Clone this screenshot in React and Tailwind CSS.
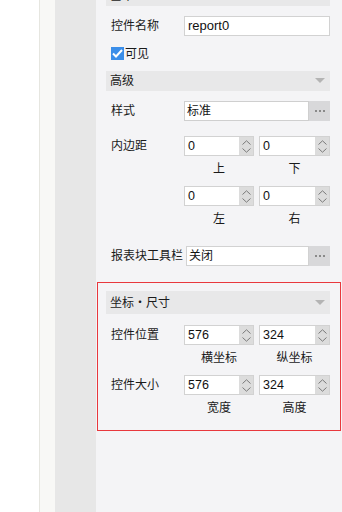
import React from "react";

const FONT = { fontFamily: '"Liberation Sans", "Noto Sans CJK SC", sans-serif' };

function Arrow() {
  return (
    <svg width="10" height="6" viewBox="0 0 10 6" className="mr-[5px]">
      <path d="M0 0 L10 0 L5 5 Z" fill="#b4b4b4" />
    </svg>
  );
}

function Header({ title, h = "h-[20px]", extra = "" }) {
  return (
    <div className={`flex items-center justify-between bg-[#e8e8e9] pl-[4px] ${h} ${extra}`}>
      <span className="text-[12px] leading-[18px] text-[#1a1a1a]">{title}</span>
      <Arrow />
    </div>
  );
}

function Chevrons() {
  return (
    <div className="flex h-full w-[14px] flex-col items-center justify-center gap-[3px] bg-[#dcdcdc]">
      <svg width="9" height="5" viewBox="0 0 9 5">
        <path d="M0.5 4.5 L4.5 0.8 L8.5 4.5" fill="none" stroke="#7a7a7a" strokeWidth="1" />
      </svg>
      <svg width="9" height="5" viewBox="0 0 9 5">
        <path d="M0.5 0.5 L4.5 4.2 L8.5 0.5" fill="none" stroke="#7a7a7a" strokeWidth="1" />
      </svg>
    </div>
  );
}

function Spin({ value, w }) {
  return (
    <div className={`flex h-[20px] border border-[#d2d2d2] bg-white ${w}`}>
      <div className="flex flex-1 items-center pl-[3px] text-[12.5px] text-[#111]">{value}</div>
      <Chevrons />
    </div>
  );
}

function SpinBlock({ label, a, b, la, lb, top = "" }) {
  return (
    <div className={`flex ${top}`}>
      <div className="w-[78px] pl-[5px] pt-[1px] text-[12px] leading-[18px] text-[#1a1a1a]">{label}</div>
      <div className="flex flex-col">
        <div className="flex gap-[5px]">
          <Spin value={a} w="w-[70px]" />
          <Spin value={b} w="w-[71px]" />
        </div>
        <div className="mt-[4px] flex gap-[5px] text-[12px] leading-[18px] text-[#1a1a1a]">
          <div className="w-[70px] text-center">{la}</div>
          <div className="w-[71px] text-center">{lb}</div>
        </div>
      </div>
    </div>
  );
}

function Dots() {
  return (
    <div className="flex h-full w-[21px] items-center justify-center gap-[2px] bg-[#d8d8da]">
      <span className="h-[2px] w-[2px] bg-[#8a8a8a]" />
      <span className="h-[2px] w-[2px] bg-[#8a8a8a]" />
      <span className="h-[2px] w-[2px] bg-[#8a8a8a]" />
    </div>
  );
}

export default function App() {
  return (
    <div className="flex h-[512px] w-[342px] overflow-hidden bg-white" style={FONT}>
      <div className="w-[39px] bg-white" />
      <div className="w-px bg-[#e6e6e0]" />
      <div className="w-[15px] bg-[#f8f8f6]" />
      <div className="w-[41px] bg-[#e7e7e7]" />
      <div className="flex flex-1 flex-col bg-[#f4f4f6] pl-[10px] pr-[12px]">
        <Header title="基本" extra="-mt-[14px]" />

        <div className="mt-[10px] flex h-[20px] items-center">
          <div className="w-[78px] pl-[5px] text-[12px] leading-[18px] text-[#1a1a1a]">控件名称</div>
          <div className="flex h-full flex-1 items-center border border-[#d2d2d2] bg-white pl-[3px] text-[13px] text-[#111]">
            report0
          </div>
        </div>

        <div className="mt-[11px] flex h-[13px] items-center pl-[5px]">
          <div className="flex h-[13px] w-[13px] items-center justify-center bg-[#3b8ee9]">
            <svg width="11" height="9" viewBox="0 0 11 9">
              <path d="M1 4.5 L4 7.5 L10 1" fill="none" stroke="white" strokeWidth="2" />
            </svg>
          </div>
          <span className="ml-[1px] text-[12px] leading-[18px] text-[#1a1a1a]">可见</span>
        </div>

        <Header title="高级" extra="mt-[11px]" />

        <div className="mt-[10px] flex h-[20px] items-center">
          <div className="w-[78px] pl-[5px] text-[12px] leading-[18px] text-[#1a1a1a]">样式</div>
          <div className="flex h-full flex-1">
            <div className="flex flex-1 items-center border border-[#cfcfcf] bg-white pl-[2px] text-[12px] text-[#111]">标准</div>
            <Dots />
          </div>
        </div>

        <SpinBlock label="内边距" a="0" b="0" la="上" lb="下" top="mt-[15px]" />
        <SpinBlock label="" a="0" b="0" la="左" lb="右" top="mt-[8px]" />

        <div className="mt-[18px] flex h-[20px] items-center">
          <div className="w-[80px] whitespace-nowrap pl-[5px] text-[12px] leading-[18px] text-[#1a1a1a]">报表块工具栏</div>
          <div className="flex h-full flex-1">
            <div className="flex flex-1 items-center border border-[#d2d2d2] bg-white pl-[2px] text-[12px] text-[#111]">关闭</div>
            <Dots />
          </div>
        </div>

        <div className="-ml-[9px] -mr-[11px] mt-[16px] h-[149px] border border-[#e8383d] pl-[8px] pr-[10px] pt-[8px]">
          <Header title="坐标・尺寸" h="h-[23px]" />
          <SpinBlock label="控件位置" a="576" b="324" la="横坐标" lb="纵坐标" top="mt-[11px]" />
          <SpinBlock label="控件大小" a="576" b="324" la="宽度" lb="高度" top="mt-[8px]" />
        </div>
      </div>
    </div>
  );
}
